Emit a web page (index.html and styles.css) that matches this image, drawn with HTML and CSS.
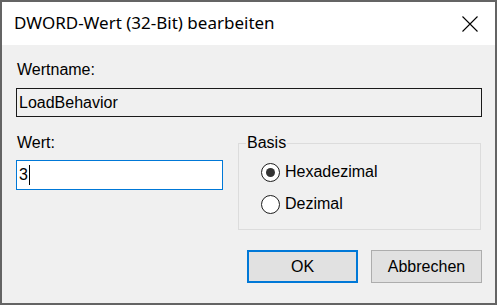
FILE: index.html
```html
<!DOCTYPE html>
<html>
<head>
  <meta charset="UTF-8">
  <title>DWORD-Wert (32-Bit) bearbeiten</title>
  <link rel="stylesheet" href="styles.css">
</head>
<body>
  <div class="window">
    <div class="titlebar">
      <span class="title">DWORD-Wert (32-Bit) bearbeiten</span>
      <span class="close">
        <svg width="16" height="16" viewBox="0 0 16 16">
          <path d="M0.5 0.5 L15.5 15.5 M15.5 0.5 L0.5 15.5" stroke="#000" stroke-width="1.1" fill="none"/>
        </svg>
      </span>
    </div>

    <div class="content">
      <div class="label">Wertname:</div>
      <div class="field field-readonly">LoadBehavior</div>

      <div class="row">
        <div class="value-col">
          <div class="label">Wert:</div>
          <div class="field field-edit">3<span class="caret"></span></div>
        </div>

        <fieldset class="basis">
          <legend>Basis</legend>
          <div class="radio checked"><span class="circle"></span>Hexadezimal</div>
          <div class="radio"><span class="circle"></span>Dezimal</div>
        </fieldset>
      </div>

      <div class="buttons">
        <button class="btn btn-default">OK</button>
        <button class="btn">Abbrechen</button>
      </div>
    </div>
  </div>
</body>
</html>
```

FILE: styles.css
```css
* {
  box-sizing: border-box;
}

body {
  width: 497px;
  height: 305px;
  margin: 0;
  overflow: hidden;
  background-color: #646464;
  font-family: "Liberation Sans", Arial, sans-serif;
  font-size: 16px;
  color: #000;
}

.window {
  display: flex;
  flex-direction: column;
  width: 493px;
  height: 301px;
  margin: 2px 0 0 2px;
  background-color: #f0f0f0;
}

.titlebar {
  display: flex;
  align-items: center;
  justify-content: space-between;
  height: 43px;
  padding: 0 17px 0 12px;
  background-color: #fff;
}

.title {
  font-family: "Noto Sans", "Open Sans", sans-serif;
  font-size: 17px;
  padding-bottom: 2px;
}

.close {
  display: flex;
  padding-top: 1px;
}

.content {
  padding: 16px 13px 0 14px;
}

.label {
  line-height: 18px;
  padding-left: 1px;
}

.field {
  display: flex;
  align-items: center;
  padding: 0 2px;
}

.field-readonly {
  height: 29px;
  margin-top: 9px;
  border: 1px solid #1a1a1a;
}

.field-edit {
  height: 30px;
  margin-top: 8px;
  border: 1px solid #0078d7;
  background-color: #fff;
}

.caret {
  width: 1px;
  height: 20px;
  margin-left: 1px;
  background-color: #000;
}

.row {
  display: flex;
  align-items: flex-start;
  gap: 15px;
  margin-top: 17px;
}

.value-col {
  width: 207px;
}

.basis {
  width: 243px;
  margin: 0;
  padding: 10px 0 15px 0;
  border: 1px solid #dcdcdc;
}

.basis legend {
  margin-left: 7px;
  padding: 0 1px;
  line-height: 18px;
}

.radio {
  display: flex;
  align-items: center;
  gap: 5px;
  height: 20px;
  margin-left: 22px;
}

.radio + .radio {
  margin-top: 12px;
}

.circle {
  display: flex;
  align-items: center;
  justify-content: center;
  width: 19px;
  height: 19px;
  border: 1px solid #1e1e1e;
  border-radius: 50%;
  background-color: #fff;
}

.checked .circle::after {
  content: "";
  width: 9px;
  height: 9px;
  border-radius: 50%;
  background-color: #333;
}

.buttons {
  display: flex;
  justify-content: flex-end;
  gap: 13px;
  margin-top: 20px;
}

.btn {
  width: 111px;
  height: 33px;
  border: 1px solid #adadad;
  background-color: #e1e1e1;
  font-family: inherit;
  font-size: 16px;
  color: #000;
  padding: 0;
}

.btn-default {
  border: 2px solid #0078d7;
}
```
